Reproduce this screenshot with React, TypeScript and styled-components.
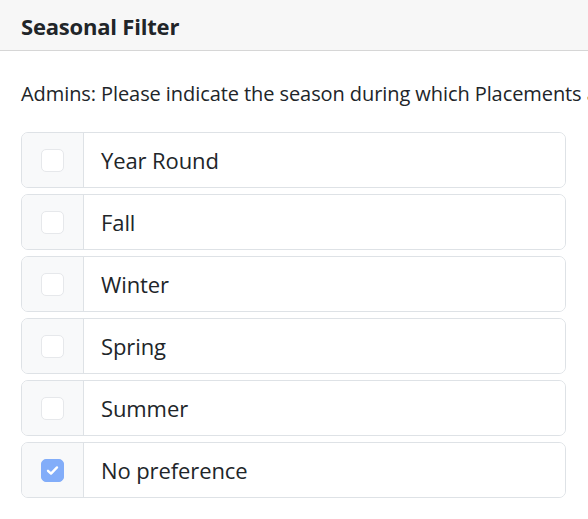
import React from "react";
import styled, { createGlobalStyle } from "styled-components";

const Global = createGlobalStyle`
  html, body { margin: 0; padding: 0; background: #fff; }
  body { font-family: "Open Sans", "Noto Sans", sans-serif; color: #212529; overflow: hidden; }
`;

const Card = styled.div`
  width: 588px;
  overflow: hidden;
`;

const Header = styled.div`
  height: 51px;
  box-sizing: border-box;
  display: flex;
  align-items: center;
  padding: 1px 21px 0;
  background: #f7f7f7;
  border-bottom: 1px solid #d6d6d6;
  font-size: 22px;
  font-weight: 700;
  letter-spacing: -0.2px;
`;

const Body = styled.div`
  padding: 29px 22px 0 21px;
`;

const Desc = styled.div`
  font-size: 20px;
  line-height: 28px;
  white-space: nowrap;
  margin-bottom: 24px;
  letter-spacing: -0.08px;
`;

const Row = styled.label`
  display: flex;
  height: 56px;
  box-sizing: border-box;
  width: 545px;
  margin-bottom: 6px;
  border: 1px solid #dee2e6;
  border-radius: 7px;
  overflow: hidden;
`;

const Addon = styled.div`
  width: 61px;
  flex: none;
  display: flex;
  align-items: center;
  justify-content: center;
  background: #f8f9fa;
  border-right: 1px solid #dee2e6;
`;

const Box = styled.span<{ $checked: boolean }>`
  width: 23px;
  height: 23px;
  box-sizing: border-box;
  border-radius: 5px;
  display: flex;
  align-items: center;
  justify-content: center;
  background: ${(p) => (p.$checked ? "#82adf9" : "#ffffff")};
  border: 1px solid ${(p) => (p.$checked ? "#82adf9" : "#e6e8eb")};
  margin-left: -1px;
`;

const Text = styled.div`
  flex: 1;
  display: flex;
  align-items: center;
  padding-left: 17px;
  font-size: 22px;
  letter-spacing: -0.1px;
  background: #fff;
`;

const items = [
  { label: "Year Round", checked: false },
  { label: "Fall", checked: false },
  { label: "Winter", checked: false },
  { label: "Spring", checked: false },
  { label: "Summer", checked: false },
  { label: "No preference", checked: true },
];

export default function App() {
  return (
    <Card>
      <Global />
      <Header>Seasonal Filter</Header>
      <Body>
        <Desc>Admins: Please indicate the season during which Placements are available</Desc>
        {items.map((it) => (
          <Row key={it.label}>
            <Addon>
              <Box $checked={it.checked}>
                {it.checked && (
                  <svg width="13" height="11" viewBox="0 0 13 11">
                    <path d="M2 5.8 L5 8.6 L11 2.4" fill="none" stroke="#fff" strokeWidth="2.4" strokeLinecap="round" strokeLinejoin="round" />
                  </svg>
                )}
              </Box>
            </Addon>
            <Text>{it.label}</Text>
          </Row>
        ))}
      </Body>
    </Card>
  );
}
